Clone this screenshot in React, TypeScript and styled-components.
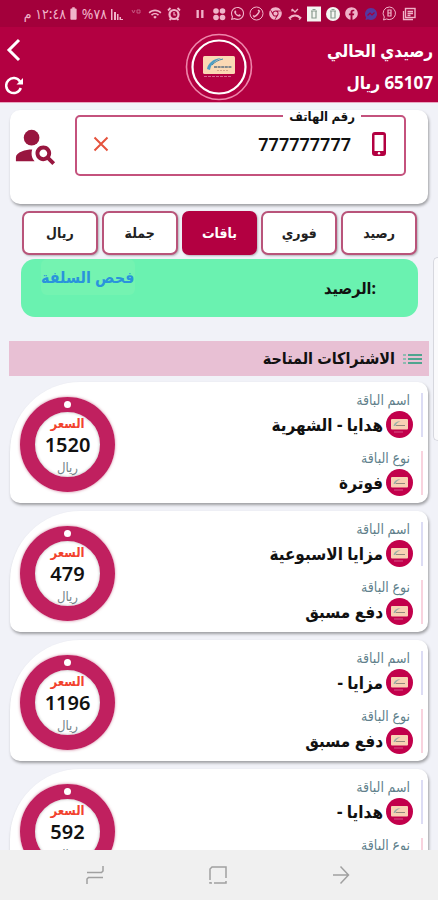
import React from 'react';
import styled, { createGlobalStyle } from 'styled-components';
import { MdPersonSearch, MdBatteryFull, MdPause, MdWifi } from 'react-icons/md';
import { FaWhatsapp, FaChrome, FaFacebook } from 'react-icons/fa';

const crimson = '#b30041';

const GlobalStyle = createGlobalStyle`
  * { box-sizing: border-box; }
  body {
    margin: 0;
    background: #f1f2f8;
    font-family: 'Noto Sans', 'DejaVu Sans Condensed', 'DejaVu Sans', sans-serif;
    color: #111;
  }
  button, input { font-family: inherit; }
`;

const Screen = styled.div`
  position: relative;
  display: flex;
  flex-direction: column;
  height: 100vh;
  overflow: hidden;
`;

const StatusBar = styled.div`
  flex: none;
  display: flex;
  justify-content: space-between;
  align-items: center;
  height: 27px;
  padding: 0 20px 0 25px;
  background: #a3003b;
  color: #f0b3c9;
`;

const StatusGroup = styled.div`
  display: flex;
  align-items: center;
  direction: ltr;
`;

const StatusSlot = styled.span`
  display: flex;
  justify-content: center;
  width: 19px;
`;

const StatusText = styled.span<{ $width: number }>`
  width: ${(p) => p.$width}px;
  font-size: 14px;
  line-height: 16px;
  direction: rtl;
  white-space: nowrap;
`;

const Header = styled.header`
  flex: none;
  display: grid;
  grid-template-columns: 1fr auto 1fr;
  align-items: center;
  height: 76px;
  padding: 5px 5px 0;
  background: ${crimson};
  border-bottom: 1px solid #e9a6c0;
  color: #fff;
`;

const Balance = styled.div`
  font-size: 17px;
  font-weight: 700;
  line-height: 32px;
  white-space: nowrap;
`;

const HeaderActions = styled.div`
  display: flex;
  flex-direction: column;
  align-items: flex-end;
  gap: 14px;
`;

const IconButton = styled.button`
  display: flex;
  padding: 0;
  border: 0;
  background: none;
  color: inherit;
  cursor: pointer;
`;

const Content = styled.main`
  flex: 1;
  min-height: 0;
  overflow-y: auto;
  scrollbar-width: none;
  padding: 7px 10px 0;
`;

const SearchCard = styled.section`
  display: flex;
  align-items: flex-start;
  justify-content: space-between;
  height: 94px;
  padding: 0 22px 0 2px;
  background: #fff;
  border-radius: 10px;
  box-shadow: 1px 2px 3px rgba(0, 0, 0, 0.35);
`;

const PhoneField = styled.fieldset`
  flex: 1;
  min-width: 0;
  height: 66px;
  margin: 0 0 0 16px;
  padding: 0 16px;
  border: 2px solid #c4527d;
  border-radius: 5px;
`;

const PhoneLegend = styled.legend`
  margin-right: 27px;
  padding: 0 6px;
  font-size: 13px;
  font-weight: 600;
  line-height: 12px;
`;

const PhoneRow = styled.div`
  display: flex;
  align-items: center;
  gap: 20px;
  height: 44px;
`;

const PhoneInput = styled.input`
  flex: 1;
  min-width: 0;
  padding: 0;
  border: 0;
  outline: 0;
  background: none;
  direction: ltr;
  text-align: right;
  font-size: 18px;
  font-weight: 600;
  line-height: 24px;
  color: #111;
`;

const SearchButton = styled(IconButton)`
  padding-top: 12px;
  color: #98163f;
`;

const Tabs = styled.nav`
  display: grid;
  grid-template-columns: repeat(5, 1fr);
  gap: 4px;
  padding: 7px 11px 4px 12px;
`;

const Tab = styled.button<{ $active?: boolean }>`
  height: 44px;
  padding: 0 0 2px;
  border: 2px solid ${(p) => (p.$active ? crimson : '#b9547a')};
  border-radius: 7px;
  background: ${(p) => (p.$active ? crimson : '#fff')};
  color: ${(p) => (p.$active ? '#fff' : '#222')};
  box-shadow: 1px 1px 2px rgba(0, 0, 0, 0.25);
  font-size: 14px;
  font-weight: 700;
  cursor: pointer;
`;

const BalancePanel = styled.section`
  display: flex;
  justify-content: space-between;
  align-items: flex-start;
  height: 58px;
  margin: 0 10px 0 11px;
  padding: 0 42px 0 20px;
  border-radius: 14px;
  background: #6af2b0;
`;

const BalanceTitle = styled.h2`
  margin: 0;
  font-size: 16px;
  font-weight: 700;
  line-height: 58px;
`;

const LoanButton = styled.button`
  height: 36px;
  padding: 0;
  border: 0;
  border-radius: 6px;
  background: #74f3b1;
  color: #2a93dc;
  font-size: 16px;
  line-height: 36px;
  font-weight: 700;
  cursor: pointer;
`;

const SectionBar = styled.div`
  display: flex;
  align-items: center;
  gap: 8px;
  height: 35px;
  margin: 24px -1px 6px;
  padding: 0 7px;
  background: #e8c0d4;
`;

const SectionTitle = styled.h2`
  margin: 0;
  padding-bottom: 2px;
  font-size: 16px;
  font-weight: 700;
  line-height: 24px;
`;

const PackageList = styled.ul`
  display: flex;
  flex-direction: column;
  gap: 8px;
  margin: 0;
  padding: 0 0 8px;
  list-style: none;
`;

const PackageCard = styled.li`
  display: flex;
  justify-content: space-between;
  align-items: center;
  height: 121px;
  padding: 0 5px 0 10px;
  background: #fff;
  border-radius: 70px 10px 10px 10px;
  box-shadow: 1px 2px 3px rgba(0, 0, 0, 0.35);
`;

const Details = styled.div`
  display: flex;
  flex-direction: column;
  gap: 14px;
  padding-top: 2px;
`;

const Detail = styled.div<{ $tone: string }>`
  height: 44px;
  padding-right: 8px;
  border-right: 2px solid ${(p) => p.$tone};
`;

const DetailLabel = styled.div`
  padding-right: 3px;
  color: #617f8b;
  font-size: 14px;
  line-height: 14px;
`;

const DetailValue = styled.div`
  display: flex;
  align-items: center;
  gap: 3px;
  height: 32px;
  margin-top: 2px;
  font-size: 17px;
  font-weight: 700;
  line-height: 24px;
  white-space: nowrap;
`;

const PriceRing = styled.div`
  position: relative;
  display: flex;
  flex-direction: column;
  align-items: center;
  justify-content: center;
  width: 95px;
  height: 95px;
  margin-top: 4px;
  border: 15px solid #c0205f;
  border-radius: 50%;
  box-shadow: 0 0 3px rgba(160, 0, 60, 0.5), inset 0 0 3px rgba(0, 0, 0, 0.3);
`;

const RingHole = styled.span`
  position: absolute;
  top: -11px;
  width: 7px;
  height: 7px;
  border-radius: 50%;
  background: #fff;
`;

const PriceCaption = styled.span<{ $accent?: boolean }>`
  color: ${(p) => (p.$accent ? '#f2432f' : '#728388')};
  font-size: 13px;
  font-weight: ${(p) => (p.$accent ? 700 : 400)};
  line-height: 20px;
`;

const Price = styled.strong`
  font-size: 20px;
  font-weight: 600;
  line-height: 24px;
`;

const EdgePanel = styled.div`
  position: absolute;
  top: 257px;
  right: 0;
  width: 5px;
  height: 184px;
  background: #fafafc;
  border: 1px solid #d6d7de;
  border-right: 0;
  border-radius: 5px 0 0 5px;
`;

const NavBar = styled.nav`
  flex: none;
  display: grid;
  grid-template-columns: repeat(3, 1fr);
  align-items: center;
  justify-items: center;
  height: 50px;
  padding: 0 36px 0 33px;
  background: #f0f0f0;
  color: #a0a0a0;
`;

const Logo = () => (
  <svg width="68" height="68" viewBox="0 0 68 68" fill="none" aria-hidden="true">
    <circle cx="34" cy="34" r="32.5" stroke="#ee86ab" strokeWidth="1.6" />
    <circle cx="34" cy="34" r="26.5" stroke="#fff" strokeWidth="2.2" />
    <rect x="18" y="23" width="32" height="18" rx="1.5" fill="#fbd9b4" />
    <path d="M22 36c1-6 6-10 14-11-6 3-10 6-11 12z" fill="#4d9fc4" />
    <path d="M27 32c3-3 6-5 11-6" stroke="#3b86ad" strokeWidth="1" />
    <path d="M29 34h18" stroke="#5c6f80" strokeWidth="1.6" strokeDasharray="3 .6" />
    <path d="M32 37.500h12" stroke="#d8a68c" strokeWidth="1" strokeDasharray="2 1" />
    <path d="M19 43.500h27" stroke="#d6648f" strokeWidth="1.2" strokeDasharray="3 1" />
  </svg>
);

const Badge = () => (
  <svg width="27" height="27" viewBox="0 0 27 27" fill="none" aria-hidden="true">
    <circle cx="13.500" cy="13.500" r="13.500" fill="#c2004b" />
    <rect x="5" y="8" width="17" height="10.500" rx="1" fill="#f8d2b4" />
    <path d="M7.500 15c.5-3 3-4.500 7-5-3 1.500-4.500 3-5 5z" fill="#9eb0a8" />
    <path d="M10 14.500h9" stroke="#96887c" strokeWidth="1" />
    <path d="M8 21h9" stroke="#d5558a" strokeWidth="1" />
  </svg>
);

const leftStatus = (
  <StatusGroup>
    <StatusText $width={41}>١٢:٤٨ م</StatusText>
    <MdBatteryFull size={15} />
    <StatusText $width={26}>٧٨%</StatusText>
    <StatusSlot>
      <svg width="12" height="12" viewBox="0 0 12 12" fill="currentColor">
        <path d="M0 1h1.500v11H0zM3 4h2v8H3zM6 6h1.500v6H6zM8.500 9h1.500v3H8.500zM10 11h2v1h-2z" />
      </svg>
    </StatusSlot>
    <StatusSlot>
      <svg width="10" height="12" viewBox="0 0 10 12" fill="none" stroke="#c65a83">
        <path d="M1 2l1.500 3L4 2M6 5V2h3v3z" />
      </svg>
    </StatusSlot>
    <StatusSlot><MdWifi size={14} /></StatusSlot>
    <StatusSlot>
      <svg width="14" height="14" viewBox="0 0 14 14" fill="none" stroke="currentColor">
        <circle cx="7" cy="7.500" r="4.500" strokeWidth="2.200" />
        <path d="M7 5v3h2" strokeWidth="1.200" />
        <path d="M1 3.500L3.500 1M13 3.500L10.500 1M2.500 13l1.500-1.500M11.500 13L10 11.500" strokeWidth="1.800" />
      </svg>
    </StatusSlot>
  </StatusGroup>
);

const rightStatus = (
  <StatusGroup>
    <StatusSlot><MdPause size={14} /></StatusSlot>
    <StatusSlot>
      <svg width="14" height="14" viewBox="0 0 14 14" fill="currentColor">
        <circle cx="4" cy="4" r="2.800" /><circle cx="10.500" cy="4" r="2.800" />
        <circle cx="4" cy="10.500" r="2.800" /><circle cx="10.500" cy="10.500" r="2.800" />
      </svg>
    </StatusSlot>
    <StatusSlot><FaWhatsapp size={15} /></StatusSlot>
    <StatusSlot>
      <svg width="15" height="15" viewBox="0 0 15 15" fill="none" stroke="currentColor">
        <circle cx="7.500" cy="7.500" r="6.500" />
        <path d="M4.500 11c3-1 5-3 6-6.500M4 9.500l2 1.500M9 4l2 1.500" strokeWidth="1.500" />
      </svg>
    </StatusSlot>
    <StatusSlot><FaChrome size={13} /></StatusSlot>
    <StatusSlot>
      <svg width="14" height="14" viewBox="0 0 14 14" fill="none" stroke="currentColor">
        <path d="M4 2l3 3 3-3M4 2v2.500" strokeWidth="1.300" />
        <path d="M1.500 11.500c2.500-4 8.500-4 11 0M1 10l2 2.500M13 10l-2 2.500" strokeWidth="2" />
      </svg>
    </StatusSlot>
    <StatusSlot>
      <svg width="16" height="16" viewBox="0 0 16 16" fill="none">
        <rect x="1" y="0.500" width="14" height="15" fill="#f4f6f2" />
        <path d="M5 5h6M6 5v7h4V5M6.500 3.500h3" stroke="#8a9c90" strokeWidth="1.200" />
      </svg>
    </StatusSlot>
    <StatusSlot>
      <svg width="16" height="16" viewBox="0 0 16 16" fill="none">
        <circle cx="8" cy="8" r="7" fill="#f4f6f2" />
        <path d="M5 5h6M6 5v7h4V5M6.500 3.500h3" stroke="#8a9c90" strokeWidth="1.200" />
      </svg>
    </StatusSlot>
    <StatusSlot><FaFacebook size={13} /></StatusSlot>
    <StatusSlot>
      <svg width="14" height="14" viewBox="0 0 14 14" fill="none">
        <path d="M7 1a6 6 0 1 1-3 11.200L1.500 13l.6-2.600A6 6 0 0 1 7 1z" fill="#5538a0" />
        <path d="M3.500 8.500L6 6l2 2 2.500-2.500" stroke="#a3003b" strokeWidth="1.200" />
      </svg>
    </StatusSlot>
    <StatusSlot>
      <svg width="15" height="15" viewBox="0 0 15 15" fill="none" stroke="currentColor">
        <path d="M7.500 1a6.300 6.300 0 1 1-3 12L1.500 14l.8-3A6.300 6.300 0 0 1 7.500 1z" />
        <path d="M6 4h3v6H6zM6 7h3" strokeWidth="1.200" />
      </svg>
    </StatusSlot>
    <StatusSlot>
      <svg width="14" height="14" viewBox="0 0 14 14" fill="none" stroke="currentColor">
        <rect x="3.500" y="1.500" width="9.500" height="9" strokeWidth="1.400" />
        <path d="M1.500 4v8.500H11M5.500 4.500h5.500M5.500 6.500h5.500M5.500 8.500h3" strokeWidth="1.300" />
      </svg>
    </StatusSlot>
  </StatusGroup>
);

const tabs = ['رصيد', 'فوري', 'باقات', 'جملة', 'ريال'];

const packages = [
  { name: 'هدايا - الشهرية', type: 'فوترة', price: 1520 },
  { name: 'مزايا الاسبوعية', type: 'دفع مسبق', price: 479 },
  { name: 'مزايا -', type: 'دفع مسبق', price: 1196 },
  { name: 'هدايا -', type: 'دفع مسبق', price: 592 },
];

export default function App() {
  return (
    <Screen dir="rtl" lang="ar">
      <GlobalStyle />
      <StatusBar>
        {rightStatus}
        {leftStatus}
      </StatusBar>
      <Header>
        <Balance>
          <div>رصيدي الحالي</div>
          <div>65107 ريال</div>
        </Balance>
        <Logo />
        <HeaderActions>
          <IconButton aria-label="رجوع">
            <svg width="18" height="24" viewBox="0 0 18 24" fill="none" stroke="currentColor" strokeWidth="3">
              <path d="M14 2L4 12l10 10" />
            </svg>
          </IconButton>
          <IconButton aria-label="تحديث">
            <svg width="19" height="20" viewBox="0 0 19 20" fill="none" stroke="currentColor" strokeWidth="2.500">
              <path d="M15 5.500A7.500 7.500 0 1 0 15.800 12" />
              <path d="M18 2v6.500h-6.500z" fill="currentColor" stroke="none" />
            </svg>
          </IconButton>
        </HeaderActions>
      </Header>
      <Content>
        <SearchCard>
          <PhoneField>
            <PhoneLegend><label htmlFor="phone">رقم الهاتف</label></PhoneLegend>
            <PhoneRow>
              <svg width="17" height="26" viewBox="0 0 17 26" aria-hidden="true">
                <rect x="1" y="1" width="14" height="24" rx="3" fill={crimson} />
                <rect x="3.500" y="4" width="9" height="16" fill="#fff" />
                <circle cx="8" cy="22.200" r="1.200" fill="#fff" />
              </svg>
              <PhoneInput id="phone" type="tel" defaultValue="777777777" />
              <IconButton type="button" aria-label="مسح">
                <svg width="16" height="16" viewBox="0 0 16 16" stroke="#e5533d" strokeWidth="2">
                  <path d="M1.500 1.500l13 13M14.500 1.500l-13 13" />
                </svg>
              </IconButton>
            </PhoneRow>
          </PhoneField>
          <SearchButton aria-label="بحث">
            <MdPersonSearch size={47} />
          </SearchButton>
        </SearchCard>
        <Tabs>
          {tabs.map((t) => (
            <Tab key={t} $active={t === 'باقات'}>{t}</Tab>
          ))}
        </Tabs>
        <BalancePanel>
          <BalanceTitle>:الرصيد</BalanceTitle>
          <LoanButton>فحص السلفة</LoanButton>
        </BalancePanel>
        <SectionBar>
          <svg width="19" height="12" viewBox="0 0 19 12" fill="none" stroke="#4fa58f" strokeWidth="2" aria-hidden="true">
            <path d="M5 2h14M5 6h14M5 10h14" />
            <path d="M0 2h3M0 6h3M0 10h3" stroke="#8fb9b0" />
          </svg>
          <SectionTitle>الاشتراكات المتاحة</SectionTitle>
        </SectionBar>
        <PackageList>
          {packages.map((p) => (
            <PackageCard key={p.price}>
              <Details>
                <Detail $tone="#dcdcf4">
                  <DetailLabel>اسم الباقة</DetailLabel>
                  <DetailValue><Badge />{p.name}</DetailValue>
                </Detail>
                <Detail $tone="#f8d3de">
                  <DetailLabel>نوع الباقة</DetailLabel>
                  <DetailValue><Badge />{p.type}</DetailValue>
                </Detail>
              </Details>
              <PriceRing>
                <RingHole />
                <PriceCaption $accent>السعر</PriceCaption>
                <Price>{p.price}</Price>
                <PriceCaption>ريال</PriceCaption>
              </PriceRing>
            </PackageCard>
          ))}
        </PackageList>
      </Content>
      <EdgePanel />
      <NavBar>
        <IconButton aria-label="السابق">
          <svg width="18" height="20" viewBox="0 0 18 20" fill="none" stroke="currentColor" strokeWidth="1.500">
            <path d="M1 10h15M8.500 1.500L16.500 10l-8 8.500" />
          </svg>
        </IconButton>
        <IconButton aria-label="الرئيسية">
          <svg width="18" height="18" viewBox="0 0 18 18" fill="none" stroke="currentColor" strokeWidth="1.500">
            <path d="M1 14V3l2-2h14v11M17 15v2H5M3 17H1v-1" />
          </svg>
        </IconButton>
        <IconButton aria-label="التطبيقات">
          <svg width="18" height="20" viewBox="0 0 18 20" fill="none" stroke="currentColor" strokeWidth="1.500">
            <path d="M1 7.500h14.500l1.500-1.500V1M17 12.500H2.500L1 14v5" />
          </svg>
        </IconButton>
      </NavBar>
    </Screen>
  );
}
